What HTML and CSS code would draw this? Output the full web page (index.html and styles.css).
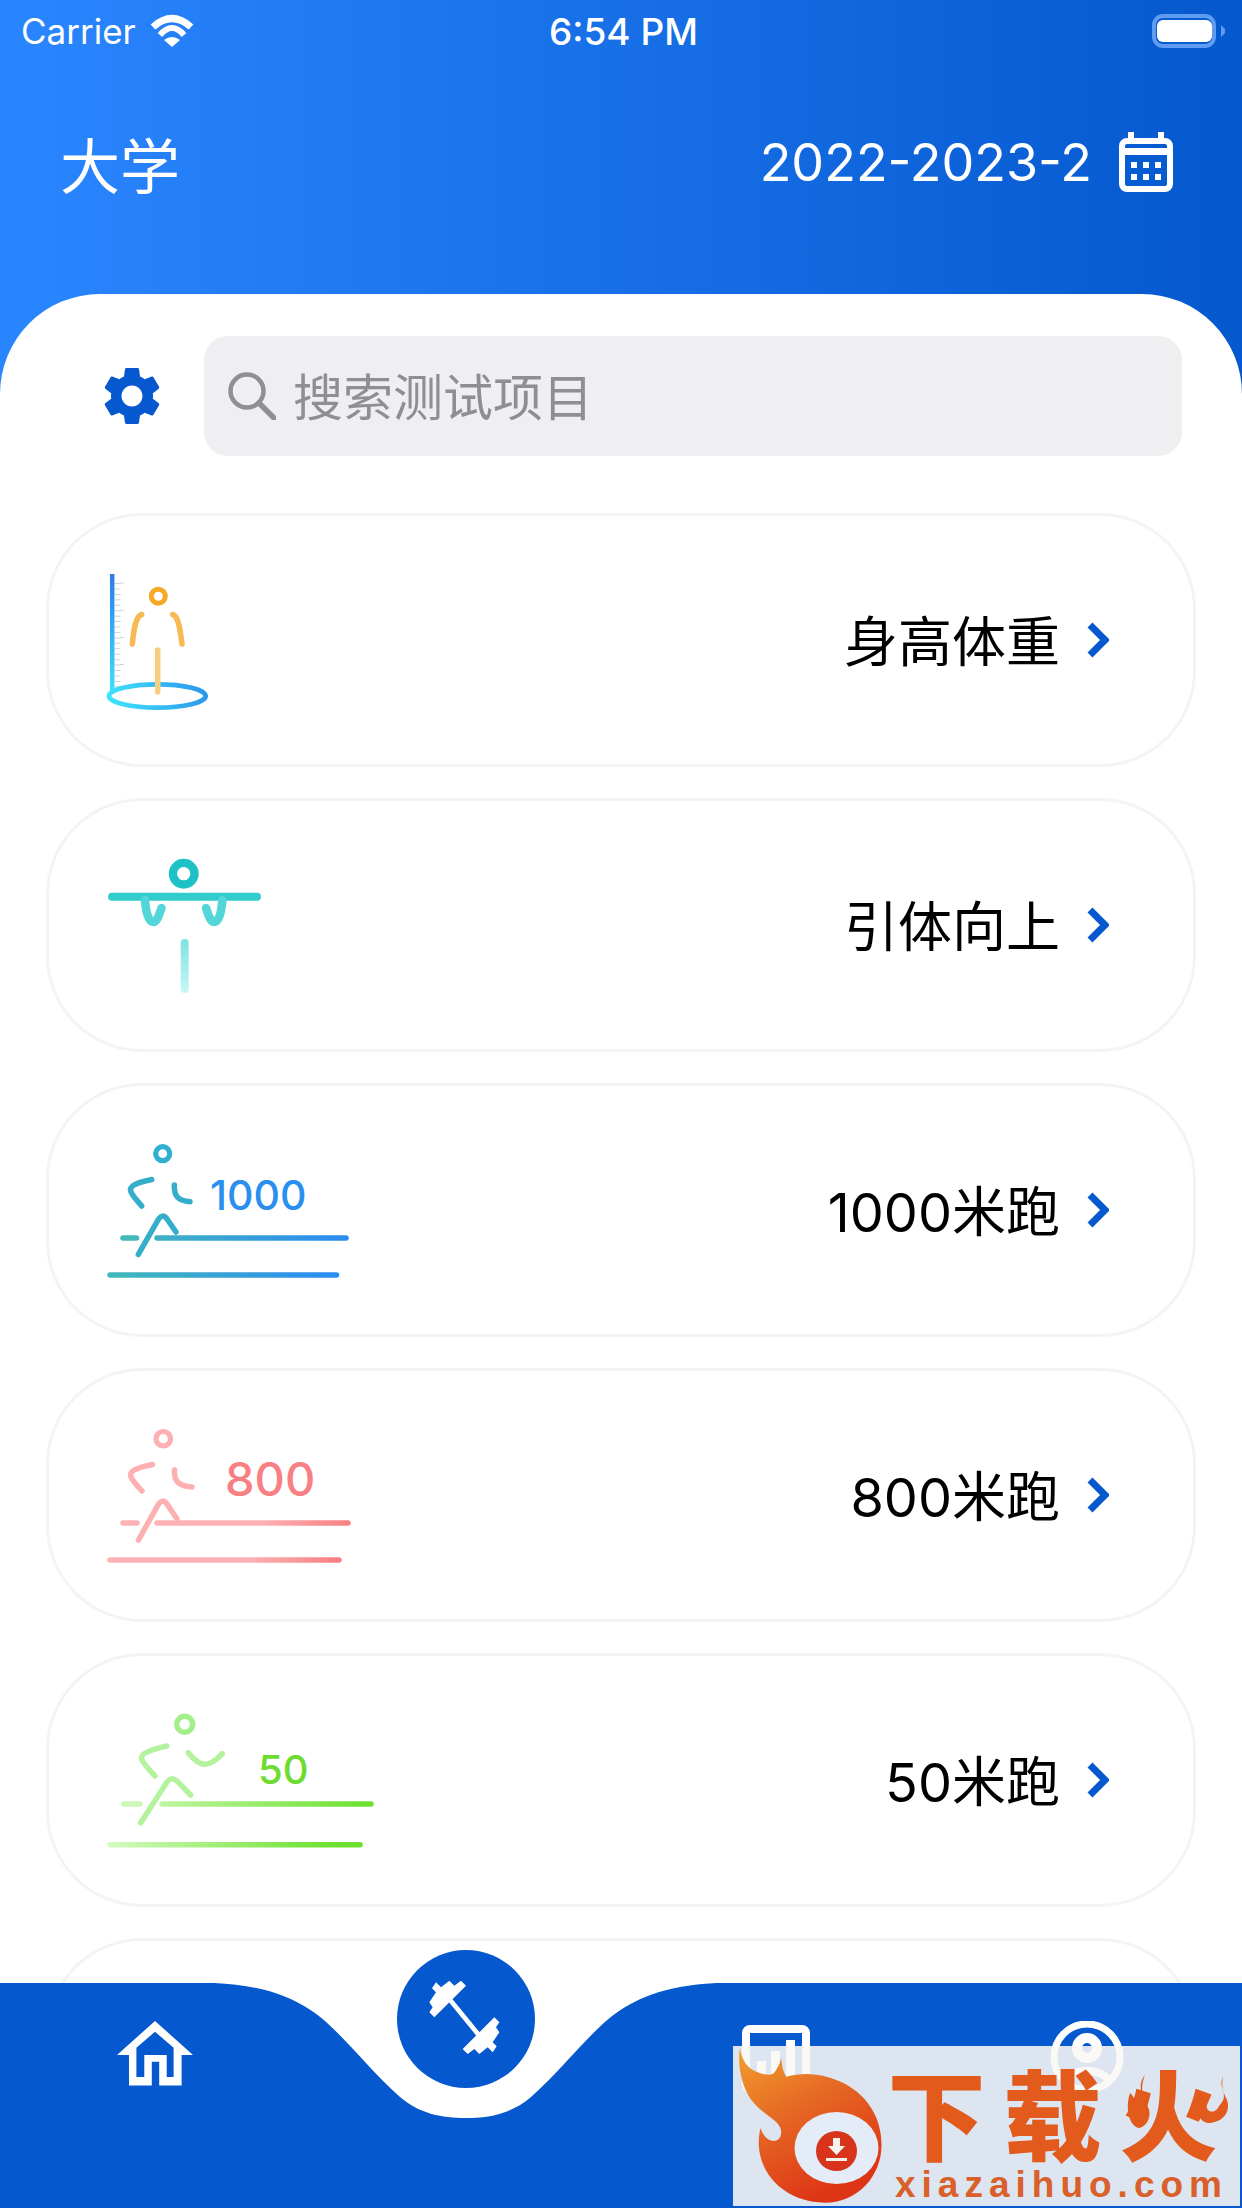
FILE: index.html

```html
<!DOCTYPE html>
<html>
<head>
<meta charset="utf-8">
<title>测试项目</title>
<link rel="stylesheet" href="styles.css">
</head>
<body>

<div class="app">

  <div class="status-bar">
    <div class="status-left">
      <span>Carrier</span>
      <svg class="wifi" width="47" height="34" viewBox="0 0 47 34">
        <path d="M4 13Q23 -4 42 13" fill="none" stroke="#fff" stroke-width="7"/>
        <path d="M11 21Q23 7 35 21" fill="none" stroke="#fff" stroke-width="6"/>
        <path d="M15 26Q23 20 31 26L23 33Z" fill="#fff"/>
      </svg>
    </div>
    <div class="status-time">6:54 PM</div>
    <div class="status-right">
      <svg width="74" height="34" viewBox="0 0 74 34">
        <rect x="2" y="2" width="60" height="30" rx="9" fill="none" stroke="#5f9bf0" stroke-width="4"/>
        <rect x="5" y="6" width="55" height="22" rx="6" fill="#fff"/>
        <path d="M69 11L73 15V19L69 23Z" fill="#5f9bf0"/>
      </svg>
    </div>
  </div>

  <div class="top-bar">
    <div class="school">大学</div>
    <div class="term">
      <span>2022-2023-2</span>
      <svg width="54" height="60" viewBox="0 0 54 60">
        <path d="M9 0h6v6h24V0h6v6h1a8 8 0 0 1 8 8v38a8 8 0 0 1-8 8H8a8 8 0 0 1-8-8V14a8 8 0 0 1 8-8h1zM6 23v29a2 2 0 0 0 2 2h38a2 2 0 0 0 2-2V23zM6 16h42v-2a2 2 0 0 0-2-2H8a2 2 0 0 0-2 2z" fill="#fff" fill-rule="evenodd"/>
        <path d="M12 30h6v6h-6zM24 30h6v6h-6zM36 30h6v6h-6zM12 42h6v6h-6zM24 42h6v6h-6zM36 42h6v6h-6z" fill="#fff"/>
      </svg>
    </div>
  </div>

  <div class="sheet">
    <div class="search-row">
      <svg class="gear" width="70" height="70" viewBox="0 0 24 24">
        <path fill="#0558ce" d="M19.14 12.94c.04-.3.06-.61.06-.94 0-.32-.02-.64-.07-.94l2.03-1.58c.18-.14.23-.41.12-.61l-1.92-3.32c-.12-.22-.37-.29-.59-.22l-2.39.96c-.5-.38-1.03-.7-1.62-.94l-.36-2.54c-.04-.24-.24-.41-.48-.41h-3.84c-.24 0-.43.17-.47.41l-.36 2.54c-.59.24-1.13.57-1.62.94l-2.39-.96c-.22-.08-.47 0-.59.22L2.74 8.87c-.12.21-.08.47.12.61l2.03 1.58c-.05.3-.09.63-.09.94s.02.64.07.94l-2.03 1.58c-.18.14-.23.41-.12.61l1.92 3.32c.12.22.37.29.59.22l2.39-.96c.5.38 1.03.7 1.62.94l.36 2.54c.05.24.24.41.48.41h3.84c.24 0 .44-.17.47-.41l.36-2.54c.59-.24 1.13-.56 1.62-.94l2.39.96c.22.08.47 0 .59-.22l1.92-3.32c.12-.22.07-.47-.12-.61l-2.01-1.58zM12 15.6c-1.98 0-3.6-1.62-3.6-3.6s1.62-3.6 3.6-3.6 3.6 1.62 3.6 3.6-1.62 3.6-3.6 3.6z"/>
      </svg>
      <div class="search-box">
        <svg width="48" height="48" viewBox="0 0 48 48">
          <circle cx="19" cy="19" r="16.500" fill="none" stroke="#8e8e93" stroke-width="4.500"/>
          <path d="M31 31L46 46" stroke="#8e8e93" stroke-width="5.500" stroke-linecap="round"/>
        </svg>
        <span class="search-text">搜索测试项目</span>
      </div>
    </div>

    <div class="card-list">

      <div class="card">
        <svg class="pic" width="330" height="247" viewBox="0 0 330 247">
          <defs>
            <linearGradient id="ruler" gradientUnits="userSpaceOnUse" x1="0" y1="57" x2="0" y2="175">
              <stop offset="0" stop-color="#2d7be6"/><stop offset="1" stop-color="#3fe0ff"/>
            </linearGradient>
            <linearGradient id="ring" gradientUnits="userSpaceOnUse" x1="50" y1="190" x2="145" y2="168">
              <stop offset="0" stop-color="#3fe3ff"/><stop offset="1" stop-color="#2b97ea"/>
            </linearGradient>
          </defs>
          <path d="M57.500 66V170" stroke="#d0d3da" stroke-width="6" stroke-dasharray="1 4.440" fill="none"/>
          <path d="M62 65.500V150" stroke="#d0d3da" stroke-width="4" stroke-dasharray="1 26.200" fill="none"/>
          <path d="M52.200 57V176" stroke="url(#ruler)" stroke-width="4.500" fill="none"/>
          <ellipse cx="97.300" cy="179" rx="48.300" ry="11.700" fill="none" stroke="url(#ring)" stroke-width="4.800"/>
          <circle cx="98.300" cy="79.300" r="7" fill="none" stroke="#f5aa26" stroke-width="5"/>
          <path d="M81.700 97.500C76 99 74 110 72.300 127M112.700 97.500C118 99 120 110 122 127" fill="none" stroke="#f6b954" stroke-width="5.500" stroke-linecap="round"/>
          <path d="M97.700 133V175" stroke="#f7cd80" stroke-width="5.500" stroke-linecap="round"/>
        </svg>
        <div class="card-label">身高体重</div>
        <svg class="chevron" width="22" height="36" viewBox="0 0 22 36"><path d="M3 3L18 18L3 33" fill="none" stroke="#0558ce" stroke-width="7"/></svg>
      </div>

      <div class="card">
        <svg class="pic" width="330" height="247" viewBox="0 0 330 247">
          <defs>
            <linearGradient id="bar-leg" gradientUnits="userSpaceOnUse" x1="0" y1="139" x2="0" y2="189">
              <stop offset="0" stop-color="#7fe2e2"/><stop offset="1" stop-color="#c4f7f7"/>
            </linearGradient>
          </defs>
          <circle cx="123.700" cy="71.700" r="10.800" fill="none" stroke="#1ec2c4" stroke-width="8.300"/>
          <path d="M52 94.700H197" stroke="#33cccc" stroke-width="8" stroke-linecap="round"/>
          <path d="M85 98C86 112 89 120 93.500 120C97 120 99 113 101.500 106M162.400 98C161.400 112 158.400 120 154 120C150.400 120 148.400 113 146 106" fill="none" stroke="#52d6d8" stroke-width="8.500" stroke-linecap="round"/>
          <path d="M124.700 141V187" stroke="url(#bar-leg)" stroke-width="8" stroke-linecap="round"/>
        </svg>
        <div class="card-label">引体向上</div>
        <svg class="chevron" width="22" height="36" viewBox="0 0 22 36"><path d="M3 3L18 18L3 33" fill="none" stroke="#0558ce" stroke-width="7"/></svg>
      </div>

      <div class="card">
        <svg class="pic" width="330" height="247" viewBox="0 0 330 247">
          <defs>
            <linearGradient id="blue-top" gradientUnits="userSpaceOnUse" x1="62" y1="0" x2="286" y2="0">
              <stop offset="0" stop-color="#42b8ba"/><stop offset="1" stop-color="#2a8cf2"/>
            </linearGradient>
            <linearGradient id="blue-low" gradientUnits="userSpaceOnUse" x1="50" y1="0" x2="277" y2="0">
              <stop offset="0" stop-color="#42b8ba"/><stop offset="1" stop-color="#2a8cf2"/>
            </linearGradient>
          </defs>
          <circle cx="102.700" cy="66.700" r="7" fill="none" stroke="#30afd0" stroke-width="5.200"/>
          <path d="M91.700 92.500C80 95 70 98 70.500 103C71 108 77 113 81.700 119M114.300 98C114 108 117 114 130 114.700M78.300 167.300L98 133C101 128 104 128 107 132L116 145" fill="none" stroke="#35aecb" stroke-width="5.500" stroke-linecap="round" stroke-linejoin="round"/>
          <path d="M63 151H76.500" stroke="#42b8ba" stroke-width="5.500" stroke-linecap="round"/>
          <path d="M97 151H286" stroke="url(#blue-top)" stroke-width="5.500" stroke-linecap="round"/>
          <path d="M50 188H276.500" stroke="url(#blue-low)" stroke-width="5.500" stroke-linecap="round"/>
          <text class="pic-num" x="150" y="123" font-size="41" fill="#2a8fee">1000</text>
        </svg>
        <div class="card-label">1000米跑</div>
        <svg class="chevron" width="22" height="36" viewBox="0 0 22 36"><path d="M3 3L18 18L3 33" fill="none" stroke="#0558ce" stroke-width="7"/></svg>
      </div>

      <div class="card">
        <svg class="pic" width="330" height="247" viewBox="0 0 330 247">
          <defs>
            <linearGradient id="red-top" gradientUnits="userSpaceOnUse" x1="62" y1="0" x2="289" y2="0">
              <stop offset="0" stop-color="#fdb3b5"/><stop offset=".6" stop-color="#fdb3b5"/><stop offset="1" stop-color="#f98083"/>
            </linearGradient>
            <linearGradient id="red-low" gradientUnits="userSpaceOnUse" x1="50" y1="0" x2="279" y2="0">
              <stop offset="0" stop-color="#fdb3b5"/><stop offset=".6" stop-color="#fdb3b5"/><stop offset="1" stop-color="#f98083"/>
            </linearGradient>
          </defs>
          <circle cx="103.300" cy="66.700" r="7.200" fill="none" stroke="#fdb0b2" stroke-width="5.200"/>
          <path d="M92.500 92.500C81 95 70 98 70.500 103C71 108 77 113 82 119M114.500 98C114 108 117 114 132 115M78.500 168L98 133C101 128 104 128 107 132L117 147" fill="none" stroke="#fdb0b2" stroke-width="5.500" stroke-linecap="round" stroke-linejoin="round"/>
          <path d="M63 151H77" stroke="#fdb3b5" stroke-width="5.500" stroke-linecap="round"/>
          <path d="M97 151H288" stroke="url(#red-top)" stroke-width="5.500" stroke-linecap="round"/>
          <path d="M50 188H279" stroke="url(#red-low)" stroke-width="5.500" stroke-linecap="round"/>
          <text class="pic-num" x="165" y="124" font-size="47" fill="#f88083">800</text>
        </svg>
        <div class="card-label">800米跑</div>
        <svg class="chevron" width="22" height="36" viewBox="0 0 22 36"><path d="M3 3L18 18L3 33" fill="none" stroke="#0558ce" stroke-width="7"/></svg>
      </div>

      <div class="card">
        <svg class="pic" width="330" height="247" viewBox="0 0 330 247">
          <defs>
            <linearGradient id="green-top" gradientUnits="userSpaceOnUse" x1="62" y1="0" x2="312" y2="0">
              <stop offset="0" stop-color="#cdf9b6"/><stop offset="1" stop-color="#6be02c"/>
            </linearGradient>
            <linearGradient id="green-low" gradientUnits="userSpaceOnUse" x1="50" y1="0" x2="300" y2="0">
              <stop offset="0" stop-color="#d2fabd"/><stop offset=".85" stop-color="#6fe234"/><stop offset="1" stop-color="#6be02c"/>
            </linearGradient>
          </defs>
          <circle cx="124.700" cy="67.300" r="8" fill="none" stroke="#a4ee8c" stroke-width="5.400"/>
          <path d="M106.700 89C94 92 81 96 81.500 101C82 106 90 113 95 119M128.300 95.700C140 110 148 112 162.300 96.700M80.700 165.700L107 125C110 121 113 121 117 124L130.700 138" fill="none" stroke="#b4f29e" stroke-width="5.500" stroke-linecap="round" stroke-linejoin="round"/>
          <path d="M63.500 147H80" stroke="#cdf9b6" stroke-width="5.500" stroke-linecap="round"/>
          <path d="M102 147H311" stroke="url(#green-top)" stroke-width="5.500" stroke-linecap="round"/>
          <path d="M50 187.700H300" stroke="url(#green-low)" stroke-width="5.500" stroke-linecap="round"/>
          <text class="pic-num" x="198" y="127" font-size="40" fill="#6cdc30">50</text>
        </svg>
        <div class="card-label">50米跑</div>
        <svg class="chevron" width="22" height="36" viewBox="0 0 22 36"><path d="M3 3L18 18L3 33" fill="none" stroke="#0558ce" stroke-width="7"/></svg>
      </div>

      <div class="card"></div>

    </div>
  </div>

  <div class="tab-bar">
    <svg class="tab-wave" width="1242" height="225" viewBox="0 0 1242 225">
      <path fill="#0558ce" d="M0 0H214C255 2 285 10 312 28C340 47 368 86 400 114C420 131 442 135 465.500 135C489 135 511 131 531 114C563 86 591 47 619 28C646 10 676 2 717 0H1242V225H0Z"/>
    </svg>
    <div class="tabs">
      <div class="tab">
        <svg width="76" height="66" viewBox="0 0 76 66">
          <path fill="#fff" fill-rule="evenodd" d="M38 0L76 34H64.600V64.500H42.200V40.700H34.800V64.500H12V34H0ZM38 10.700L19.400 26.700V56H27.300V34H49.700V56H56.600V26.700Z"/>
        </svg>
      </div>
      <div class="tab tab-main">
        <div class="tab-circle">
          <svg width="90" height="100" viewBox="0 0 270 300">
            <g fill="#fff">
              <polygon points="45,40 60,55 85,35 100,50 120,35 135,50 40,145 25,130 35,115 25,100 45,70 33,58"/>
              <polygon points="215,250 200,235 175,255 160,240 140,255 125,240 220,145 235,160 225,175 235,190 215,220 227,232"/>
            </g>
            <path d="M85 90L175 200" stroke="#fff" stroke-width="14"/>
          </svg>
        </div>
      </div>
      <div class="tab">
        <svg width="68" height="72" viewBox="0 0 68 72">
          <rect x="4" y="8" width="60" height="60" rx="4" fill="none" stroke="#fff" stroke-width="8"/>
          <path d="M15 40h9v16h-9zM29 30h9v26h-9zM44 19h9v37h-9z" fill="#fff"/>
        </svg>
      </div>
      <div class="tab">
        <svg width="74" height="72" viewBox="0 0 74 72">
          <circle cx="37" cy="36" r="33" fill="none" stroke="#fff" stroke-width="7"/>
          <circle cx="37" cy="27" r="10" fill="none" stroke="#fff" stroke-width="10"/>
          <path d="M15 62C18 46 56 46 59 62" fill="none" stroke="#fff" stroke-width="8"/>
        </svg>
      </div>
    </div>
  </div>

  <div class="watermark">
    <svg class="wm-flame" width="150" height="160" viewBox="0 0 150 160">
      <defs>
        <linearGradient id="flame" x1="0" y1="0" x2=".5" y2="1">
          <stop offset="0" stop-color="#f2a02e"/><stop offset=".45" stop-color="#e66a24"/><stop offset="1" stop-color="#de3516"/>
        </linearGradient>
      </defs>
      <path fill="url(#flame)" d="M6.800 2.300C10 18 16 24 30 28C35 29 40 30 43 24C46 20 47 16 48.200 12C49 20 50 26 53.400 30.700C70 26 88 27 106 35C134 47 149 72 148.500 100C148 130 125 157 91.400 156.700C55 156 28 132 25.800 100C25.500 94 26 88 27.500 82C30 90 35 95 41 95C46 95 49 90 48 84C46 74 32 70 20 56C10 44 4 22 6.800 2.300Z"/>
      <ellipse cx="103.500" cy="102" rx="42" ry="36" fill="#e3ecf7"/>
      <ellipse cx="103.500" cy="105" rx="20.500" ry="20" fill="#d8341c"/>
      <path d="M100 92h7v8h5l-8.500 9l-8.500-9h5zM93 112h21v3h-21z" fill="#f4f2ee"/>
    </svg>
    <div class="wm-text">
      <div class="wm-title">下载火</div>
      <div class="wm-url">xiazaihuo.com</div>
    </div>
    <svg class="wm-sparks" width="507" height="160" viewBox="0 0 507 160">
      <path fill="#e25a1c" d="M412 29C402 42 414 48 404 60C402 52 400 50 397 47C392 62 396 80 406 82C416 80 420 66 413 58C408 50 408 38 412 29Z"/>
      <path fill="#e25a1c" d="M490 31C484 42 498 48 486 60C484 66 476 68 474 62C472 56 474 52 470 52C462 62 464 76 476 77C490 76 498 66 494 54C490 46 488 40 490 31Z"/>
    </svg>
  </div>

</div>

</body>
</html>
```

FILE: styles.css

```css
* {
  box-sizing: border-box;
}

body {
  margin: 0;
  font-family: Inter, "Noto Sans CJK SC", sans-serif;
}

.app {
  position: relative;
  width: 1242px;
  height: 2208px;
  overflow: hidden;
  display: flex;
  flex-direction: column;
  background: linear-gradient(to right, #2a86ff, #0558ce);
  color: #fff;
}

.status-bar {
  height: 62px;
  display: grid;
  grid-template-columns: 1fr auto 1fr;
  align-items: center;
  padding: 0 16px 0 21px;
  font-size: 35px;
}

.status-left {
  display: flex;
  align-items: center;
  gap: 13px;
}

.status-time {
  font-size: 37px;
  font-weight: 500;
}

.status-right {
  display: flex;
  justify-content: flex-end;
}

.top-bar {
  height: 232px;
  padding: 0 69px 32px 60px;
  display: flex;
  align-items: center;
  justify-content: space-between;
}

.school {
  font-size: 60px;
}

.term {
  display: flex;
  align-items: center;
  gap: 27px;
  font-size: 52px;
}

.sheet {
  flex: 1;
  min-height: 0;
  background: #fff;
  border-radius: 100px 100px 0 0;
  padding-top: 42px;
  color: #000;
}

.search-row {
  display: flex;
  align-items: center;
  gap: 37px;
  padding: 0 60px 0 97px;
}

.search-box {
  flex: 1;
  height: 120px;
  border-radius: 24px;
  background: #efeff1;
  display: flex;
  align-items: center;
  gap: 17px;
  padding-left: 24px;
  font-size: 50px;
  color: #8e8e93;
}

.search-text {
  padding-bottom: 4px;
}

.card-list {
  margin: 57px 46px 0;
  display: flex;
  flex-direction: column;
  gap: 31px;
}

.card {
  flex: none;
  height: 254px;
  border: 3px solid #f4f4f5;
  border-radius: 96px;
  display: flex;
  align-items: center;
  padding: 0 84px 0 11px;
}

.pic {
  flex: none;
}

.pic-num {
  font-family: Inter, sans-serif;
  font-weight: 500;
}

.card-label {
  margin-left: auto;
  padding-bottom: 4px;
  font-size: 54px;
}

.chevron {
  margin-left: 27px;
}

.tab-bar {
  position: absolute;
  left: 0;
  bottom: 0;
  width: 1242px;
  height: 258px;
}

.tab-wave {
  position: absolute;
  left: 0;
  top: 33px;
}

.tabs {
  position: relative;
  display: grid;
  grid-template-columns: repeat(4, 1fr);
}

.tab {
  display: flex;
  justify-content: center;
  padding-top: 71px;
}

.tab-main {
  padding-top: 0;
}

.tab-circle {
  width: 138px;
  height: 138px;
  border-radius: 50%;
  background: #0558ce;
  display: flex;
  align-items: center;
  justify-content: center;
}

.watermark {
  position: absolute;
  left: 733px;
  top: 2046px;
  width: 507px;
  height: 160px;
  background: rgba(250, 248, 245, 0.88);
  display: flex;
  overflow: hidden;
}

.wm-flame {
  flex: none;
}

.wm-sparks {
  position: absolute;
  left: 0;
  top: 0;
}

.wm-text {
  display: flex;
  flex-direction: column;
  align-items: center;
  width: 357px;
  padding-top: 24px;
  color: #e25a1c;
}

.wm-title {
  height: 96px;
  font-size: 98px;
  font-weight: 900;
  line-height: 96px;
  letter-spacing: 18px;
  white-space: nowrap;
}

.wm-url {
  font-family: "Liberation Sans", sans-serif;
  font-size: 37px;
  font-weight: 700;
  line-height: 38px;
  letter-spacing: 6px;
  white-space: nowrap;
  color: #d9602a;
}
```
